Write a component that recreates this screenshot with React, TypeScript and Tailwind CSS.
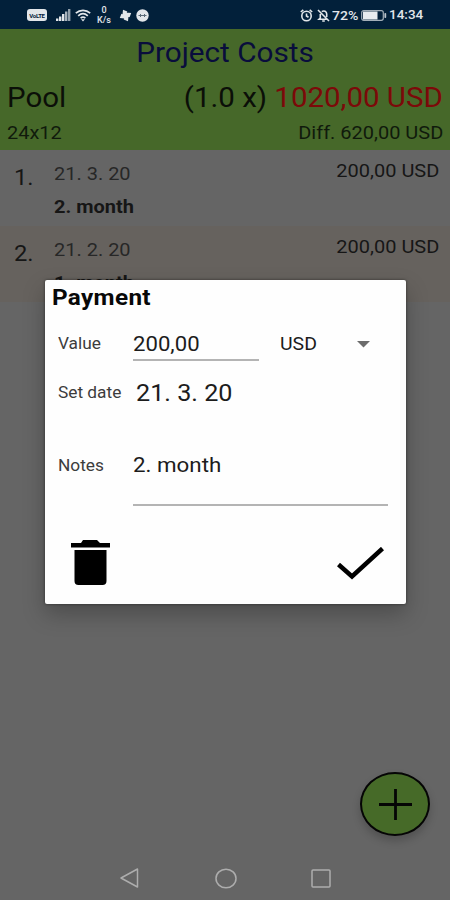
import clsx from "clsx"

const payments = [
  { id: 1, date: "21. 3. 20", note: "2. month", amount: "200,00 USD" },
  { id: 2, date: "21. 2. 20", note: "1. month", amount: "200,00 USD" },
]

function Label({
  className,
  origin = "origin-left",
  children,
}: {
  className?: string
  origin?: string
  children: React.ReactNode
}) {
  return (
    <span className={clsx("block scale-x-[1.08] leading-none whitespace-nowrap", origin, className)}>
      {children}
    </span>
  )
}

function StatusBar() {
  return (
    <div className="flex h-[29px] items-center justify-between bg-[#02203a] pr-[26px] pl-[27px] pt-px text-[#e2e6ea]">
      <div className="flex items-center">
        <span className="flex h-3 w-5 items-center justify-center rounded-[3px] bg-[#e2e6ea] text-[6px] font-bold tracking-tighter text-[#02203a]">
          VoLTE
        </span>
        <svg className="ml-[9px] h-3 w-[15px]" viewBox="0 0 15 12" fill="currentColor">
          <rect x="0" y="9.5" width="2.4" height="2.500" />
          <rect x="3" y="7.5" width="2.4" height="4.500" />
          <rect x="6" y="5" width="2.4" height="7" />
          <rect x="9" y="2.5" width="2.4" height="9.5" opacity=".75" />
          <rect x="12" y="0" width="2.4" height="12" opacity=".65" />
        </svg>
        <svg className="ml-1 h-[13px] w-4" viewBox="0 0 16 13" fill="none" stroke="currentColor" strokeWidth="1.7">
          <path d="M.8 4.2C5 .4 11 .4 15.2 4.2M3.2 6.8c2.9-2.6 6.7-2.6 9.6 0M5.6 9.2c1.500-1.3 3.3-1.3 4.8 0" />
          <path d="M6 10.2h4L8 12.6z" fill="currentColor" stroke="none" />
        </svg>
        <div className="ml-[5px] flex w-4 flex-col items-center text-[9px] leading-[10px] font-medium">
          <span>0</span>
          <span>K/s</span>
        </div>
        <svg className="ml-[7px] size-[13px]" viewBox="0 0 13 13" fill="currentColor">
          <path d="M6.5 6.5 3.500 5.500 4 .8l4.300 1.600zM6.500 6.500 7.500 3.500l4.700.500-1.600 4.300zM6.500 6.500l3 1L9 12.200l-4.300-1.600zM6.500 6.500l-1 3L.8 9l1.600-4.300z" />
        </svg>
        <svg className="ml-[4px] size-[13px]" viewBox="0 0 13 13">
          <circle cx="6.500" cy="6.500" r="6.200" fill="currentColor" />
          <path d="M2.500 6.500h8M4.500 5v3M8.500 5v3" stroke="#5a6a78" strokeWidth="1" />
        </svg>
      </div>
      <div className="flex items-center">
        <svg className="size-[13px]" viewBox="0 0 13 13" fill="none" stroke="currentColor" strokeWidth="1.600">
          <circle cx="6.500" cy="7" r="4.700" />
          <path d="M6.500 4.500V7l2 1.200M.8 3 3.300.900M12.200 3 9.700.900" />
        </svg>
        <svg className="ml-[4px] size-[13px]" viewBox="0 0 13 13" fill="none" stroke="currentColor" strokeWidth="1.600">
          <path d="M3.300 5v4L2 10.300h7.500M4.800 2.700C7 1 9.700 2.600 9.700 5v3M5.200 12h2.600M1 1l11 11" />
        </svg>
        <Label className="ml-[2px] w-[29px] text-[13px] font-medium">72%</Label>
        <svg className="h-[11px] w-[26px]" viewBox="0 0 26 11">
          <rect x=".7" y=".7" width="21.600" height="9.600" rx="2" fill="none" stroke="#a3afb9" strokeWidth="1.200" />
          <rect x="2" y="1.500" width="14.500" height="8" fill="#e9edf0" />
          <rect x="23.400" y="3" width="1.800" height="5" rx=".8" fill="#b9c3cb" />
        </svg>
        <Label className="ml-[2px] w-[35px] text-[12.500px] font-medium">14:34</Label>
      </div>
    </div>
  )
}

function Header() {
  return (
    <div className="h-[121px] bg-[#466829] px-[7px] pt-[10px]">
      <Label origin="origin-center" className="text-center text-[27.500px] text-[#090d3c]">
        Project Costs
      </Label>
      <div className="mt-[18px] flex justify-between text-[27.300px] text-[#0b0f08]">
        <Label>Pool</Label>
        <Label origin="origin-right">
          (1.0 x) <span className="text-[#7c0909]">1020,00 USD</span>
        </Label>
      </div>
      <div className="mt-[12px] flex justify-between text-[18.500px] text-[#101a0c]">
        <Label>24x12</Label>
        <Label origin="origin-right">Diff. 620,00 USD</Label>
      </div>
    </div>
  )
}

function PaymentList() {
  return (
    <div>
      {payments.map((p, i) => (
        <div
          key={p.id}
          className={clsx("flex h-[76px] pr-[11px] pl-[14px] text-[#161616]", i % 2 === 1 && "bg-[#66625e]")}
        >
          <Label className="w-[40px] pt-[17px] text-[22px]">{p.id}.</Label>
          <div className="flex-1">
            <Label className="mt-[15px] text-[18.500px] text-[#272727]">{p.date}</Label>
            <Label className="mt-[14px] text-[18.500px] font-bold">{p.note}</Label>
          </div>
          <Label origin="origin-right" className="mt-3 text-[18.500px]">
            {p.amount}
          </Label>
        </div>
      ))}
    </div>
  )
}

function PaymentDialog() {
  return (
    <div className="absolute top-[280px] left-[45px] h-[324px] w-[361px] rounded-[2px] bg-[#fefefe] pt-[6px] text-[#1c1c1c] shadow-[0_10px_22px_rgba(0,0,0,0.25),0_0_3px_rgba(0,0,0,0.5)]">
      <Label className="ml-[7px] text-[22.500px] font-bold tracking-[0.3px] text-[#080808]">Payment</Label>

      {/* Value */}
      <div className="mt-[25.500px] flex h-[27px] pl-[13px]">
        <Label className="w-[75px] pt-[2px] text-[16px] text-[#3c3c3c]">Value</Label>
        <div className="w-[126px] border-b-2 border-[#b4b4b4]">
          <Label className="text-[20.500px]">200,00</Label>
        </div>
        <Label className="ml-[21px] w-[77px] pt-px text-[18px]">USD</Label>
        <svg className="mt-[7px] h-[7px] w-[13px]" viewBox="0 0 13 7">
          <path d="M0 0h13L6.500 6.500z" fill="#6c6c6c" />
        </svg>
      </div>

      {/* Date */}
      <div className="mt-[21px] flex h-[24px] pl-[13px]">
        <Label className="w-[78px] pt-[3px] text-[16px] text-[#3c3c3c]">Set date</Label>
        <Label className="text-[23.300px]">21. 3. 20</Label>
      </div>

      {/* Notes */}
      <div className="mt-[50px] flex h-[50px] pl-[13px]">
        <Label className="w-[75px] pt-[2px] text-[16px] text-[#3c3c3c]">Notes</Label>
        <div className="w-[255px] border-b-2 border-[#b4b4b4]">
          <Label className="-mt-px text-[20.700px]">2. month</Label>
        </div>
      </div>

      <div className="mt-[34px] flex justify-between pr-[22px] pl-[26px] text-black">
        <svg className="h-[45px] w-[39px]" viewBox="0 0 39 45" fill="currentColor">
          <path d="M0 3h10l2-3h14l3 3h10v4.500H0zM3.500 10h32v31q0 4-4 4h-24q-4 0-4-4z" />
        </svg>
        <svg className="mt-[7px] h-[33px] w-[47px]" viewBox="0 0 47 33" fill="none" stroke="currentColor" strokeWidth="4.500">
          <path d="m1.500 17.500 13.500 12L45.500 1.500" />
        </svg>
      </div>
    </div>
  )
}

function NavBar() {
  return (
    <div className="flex h-11 items-center justify-between pr-[119px] pl-[120px]">
      <svg className="h-5 w-5" viewBox="0 0 20 20" fill="none" stroke="#adadad" strokeWidth="1.500" strokeLinejoin="round">
        <path d="M1 10 17.500 1v18z" />
      </svg>
      <svg className="h-[21px] w-[22px]" viewBox="0 0 22 21" fill="none" stroke="#adadad" strokeWidth="1.500">
        <ellipse cx="11" cy="10.500" rx="10" ry="9.300" />
      </svg>
      <svg className="h-[19px] w-5" viewBox="0 0 20 19" fill="none" stroke="#adadad" strokeWidth="1.500">
        <rect x="1" y="1" width="18" height="17" rx="1" />
      </svg>
    </div>
  )
}

export default function App() {
  return (
    <div className="relative flex h-[900px] w-[450px] flex-col overflow-hidden bg-[#656565] font-['Roboto',sans-serif]">
      <StatusBar />
      <Header />
      <div className="flex-1">
        <PaymentList />
      </div>
      <NavBar />

      <div className="absolute top-[772px] left-[360px] flex h-[64px] w-[70px] items-center justify-center rounded-[50%] border-[2.500px] border-[#050505] bg-[#466a28] shadow-[0_5px_8px_rgba(0,0,0,0.2)]">
        <svg className="h-[31px] w-[33px]" viewBox="0 0 33 31" stroke="#050505" strokeWidth="2.800">
          <path d="M0 15.500h33M16.500 0v31" />
        </svg>
      </div>

      <PaymentDialog />
    </div>
  )
}
